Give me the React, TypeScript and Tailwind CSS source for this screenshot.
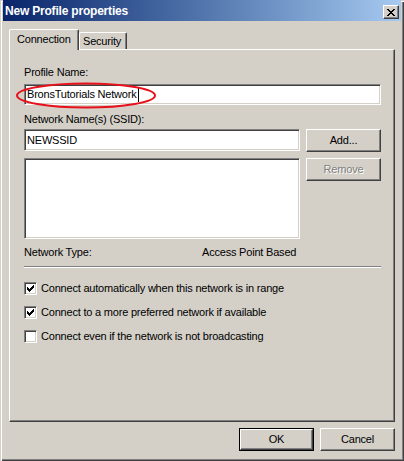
import React from "react";

const field =
  "bg-white border border-t-[#808080] border-l-[#808080] border-r-white border-b-white shadow-[inset_1px_1px_0_#404040,inset_-1px_-1px_0_#d4d0c8]";
const raised =
  "bg-[#d4d0c8] border border-t-white border-l-white border-r-[#404040] border-b-[#404040] shadow-[inset_-1px_-1px_0_#808080]";

function Pixels({ w, h, px }: { w: number; h: number; px: number[][] }) {
  return (
    <svg width={w} height={h} viewBox={`0 0 ${w} ${h}`} shapeRendering="crispEdges">
      {px.map(([x, y]) => (
        <rect key={`${x}-${y}`} x={x} y={y} width="1" height="1" fill="#000" />
      ))}
    </svg>
  );
}

const checkPx = [
  [6, 0],
  [5, 1], [6, 1],
  [0, 2], [4, 2], [5, 2], [6, 2],
  [0, 3], [1, 3], [3, 3], [4, 3], [5, 3],
  [0, 4], [1, 4], [2, 4], [3, 4], [4, 4],
  [1, 5], [2, 5], [3, 5],
  [2, 6],
];

const closePx = [
  [0, 0], [1, 0], [6, 0], [7, 0],
  [1, 1], [2, 1], [5, 1], [6, 1],
  [2, 2], [3, 2], [4, 2], [5, 2],
  [3, 3], [4, 3],
  [2, 4], [3, 4], [4, 4], [5, 4],
  [1, 5], [2, 5], [5, 5], [6, 5],
  [0, 6], [1, 6], [6, 6], [7, 6],
];

function CheckRow({ checked, label }: { checked: boolean; label: string }) {
  return (
    <div className="flex items-center h-[13px]">
      <div className={`${field} w-[13px] h-[13px] flex items-center justify-center shrink-0`}>
        {checked && <Pixels w={7} h={7} px={checkPx} />}
      </div>
      <span className="ml-[4px] leading-[13px] whitespace-nowrap">{label}</span>
    </div>
  );
}

export default function App() {
  return (
    <div className="relative w-[404px] h-[461px] bg-[#d4d0c8] flex flex-col font-['Liberation_Sans',Arial,sans-serif] text-[11px] tracking-[-0.2px] text-black shadow-[inset_1px_1px_0_#d4d0c8,inset_2px_2px_0_#ffffff,inset_-1px_-1px_0_#404040,inset_-2px_-2px_0_#808080] overflow-hidden">
      {/* Title bar */}
      <div className="mx-[3px] h-[21px] bg-gradient-to-r from-[#0a246a] to-[#a6caf0] flex items-start">
        <span className="pl-[2px] pt-[4px] text-white font-bold text-[12px] leading-[14px] tracking-[-0.2px] whitespace-nowrap">
          New Profile properties
        </span>
        <div className="ml-auto mr-[2px] mt-[5px]">
          <div className={`${raised} w-[16px] h-[14px] flex items-center justify-center`}>
            <Pixels w={8} h={7} px={closePx} />
          </div>
        </div>
      </div>

      <div className="px-[9px] pt-[8px] flex flex-col">
        {/* Tabs */}
        <div className="h-[20px] flex items-end">
          <div className="relative z-10 -mb-px w-[70px] h-[21px] bg-[#d4d0c8] border-t border-l border-r border-t-white border-l-white border-r-[#404040] rounded-tl-[2px] rounded-tr-[2px] shadow-[inset_-1px_0_0_#808080] pl-[7px] pt-[3px] leading-[13px] whitespace-nowrap">
            Connection
          </div>
          <div className="w-[48px] h-[17px] bg-[#d4d0c8] border-t border-l border-r border-t-white border-l-white border-r-[#404040] rounded-tl-[2px] rounded-tr-[2px] shadow-[inset_-1px_0_0_#808080] pl-[3px] pt-[2px] leading-[13px] whitespace-nowrap">
            Security
          </div>
        </div>

        {/* Panel */}
        <div className="h-[373px] border border-t-white border-l-white border-r-[#404040] border-b-[#404040] shadow-[inset_-1px_-1px_0_#808080] pl-[14px] pr-[13px] pt-[16px] flex flex-col">
          <div className="leading-[13px] h-[13px]">Profile Name:</div>
          <div className={`${field} mt-[5px] h-[21px] flex items-center pl-[2px]`}>
            <span className="leading-[13px] whitespace-nowrap">BronsTutorials Network</span>
            <span className="ml-[1px] w-px h-[14px] bg-black" />
          </div>

          <div className="mt-[8px] leading-[13px] h-[13px]">Network Name(s) (SSID):</div>
          <div className="mt-[3px] flex gap-[6px]">
            <div className="w-[276px] flex flex-col gap-[7px]">
              <div className={`${field} h-[22px] flex items-center pl-[2px]`}>
                <span className="leading-[13px]">NEWSSID</span>
              </div>
              <div className={`${field} h-[81px]`} />
            </div>
            <div className="flex-1 flex flex-col gap-[6px]">
              <div className={`${raised} h-[23px] flex items-center justify-center leading-[13px]`}>Add...</div>
              <div className={`${raised} h-[23px] flex items-center justify-center leading-[13px] text-[#808080] [text-shadow:1px_1px_0_#ffffff]`}>
                Remove
              </div>
            </div>
          </div>

          <div className="mt-[7px] flex leading-[13px] h-[13px]">
            <span className="w-[178px]">Network Type:</span>
            <span>Access Point Based</span>
          </div>

          <div className="mt-[7px] h-[2px] border-t border-t-[#808080] border-b border-b-white" />

          <div className="mt-[14px] flex flex-col gap-[11px]">
            <CheckRow checked label="Connect automatically when this network is in range" />
            <CheckRow checked label="Connect to a more preferred network if available" />
            <CheckRow checked={false} label="Connect even if the network is not broadcasting" />
          </div>
        </div>

        {/* Buttons */}
        <div className="mt-[6px] flex justify-end gap-[6px]">
          <div className="w-[75px] h-[23px] border border-black">
            <div className={`${raised} w-full h-full flex items-center justify-center leading-[13px]`}>OK</div>
          </div>
          <div className={`${raised} w-[75px] h-[23px] flex items-center justify-center leading-[13px]`}>Cancel</div>
        </div>
      </div>

      {/* Red highlight ellipse */}
      <svg className="absolute left-[15px] top-[82px]" width="142" height="28" viewBox="0 0 142 28">
        <ellipse cx="71" cy="13.5" rx="69" ry="12" fill="none" stroke="#e8101a" strokeWidth="2" />
      </svg>
    </div>
  );
}
